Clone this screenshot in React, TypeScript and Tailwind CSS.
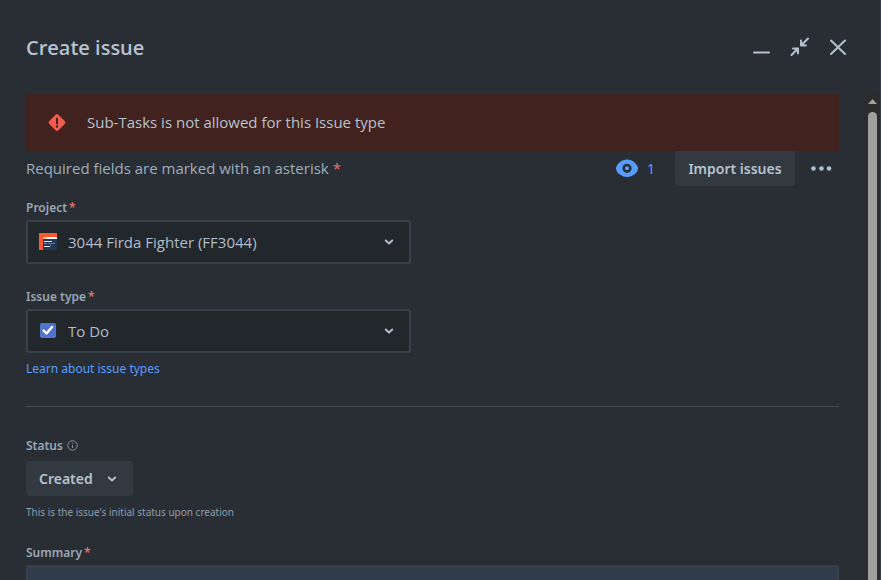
import { useState } from "react";
import type { ReactNode } from "react";

function Chevron() {
  return (
    <svg width="10" height="8" viewBox="0 0 10 8" fill="none" stroke="#b0bfd0" strokeWidth="2" strokeLinecap="round" strokeLinejoin="round" aria-hidden="true">
      <path d="M1.8 2.500 L5 5.500 L8.200 2.500" />
    </svg>
  );
}

function Asterisk() {
  return <span className="ml-0.5 text-[#e2746a]">*</span>;
}

function FieldLabel({ htmlFor, children }: { htmlFor: string; children: ReactNode }) {
  return (
    <label htmlFor={htmlFor} className="block text-[12px] leading-4 font-semibold text-[#98a6b6]">
      {children}
      <Asterisk />
    </label>
  );
}

function SelectField({ id, label, option, icon }: { id: string; label: string; option: string; icon: ReactNode }) {
  return (
    <div>
      <FieldLabel htmlFor={id}>{label}</FieldLabel>
      <div className="relative mt-1 w-full max-w-[385px]">
        <select
          id={id}
          className="block h-11 w-full appearance-none rounded-[3px] border-2 border-[#384148] bg-[#22272b] pr-10 pl-10 font-['Open_Sans','Noto_Sans',sans-serif] text-[15px] text-[#b0bcc9]"
        >
          <option>{option}</option>
        </select>
        <span className="pointer-events-none absolute inset-y-0 left-3 flex items-center">{icon}</span>
        <span className="pointer-events-none absolute inset-y-0 right-[17px] flex items-center">
          <Chevron />
        </span>
      </div>
    </div>
  );
}

function ProjectIcon() {
  return (
    <svg width="20" height="18" viewBox="0 0 20 18" aria-hidden="true">
      <rect x="1" width="18" height="17" fill="#ff5630" />
      <rect x="5" y="4" width="14" height="13" fill="#253858" />
      <rect x="5" y="4" width="14" height="2" fill="#f4f5f7" />
      <rect x="5" y="4" width="4" height="2" fill="#ffc5a0" />
      <path d="M6 8.500h8M6 13.500h6" stroke="#deebff" />
      <path d="M6 10.500h3M12 12.500h1" stroke="#ff5630" />
      <path d="M10 10.500h7" stroke="#00a3bf" />
    </svg>
  );
}

function TaskIcon() {
  return (
    <svg width="20" height="18" viewBox="0 0 20 18" fill="none" aria-hidden="true">
      <rect x="2" y="1" width="16" height="15" rx="2" fill="#4f74cf" />
      <path d="M5.500 8.500 L8.500 11.500 L14 5" stroke="#fff" strokeWidth="2.400" strokeLinecap="round" strokeLinejoin="round" />
    </svg>
  );
}

export default function App() {
  const [summary, setSummary] = useState("");
  return (
    <main className="flex h-screen flex-col overflow-hidden border-r border-[#34414c] bg-[#292e35] font-['Noto_Sans','Open_Sans',sans-serif] text-[14px] text-[#b6c2cf]">
      <header className="flex h-[94px] shrink-0 items-center justify-between pr-8 pl-[26px]">
        <h1 className="pt-0.5 font-['Open_Sans','Noto_Sans',sans-serif] text-[20px] leading-8 font-semibold">Create issue</h1>
        <div className="flex items-center gap-[18px] text-[#b3c1d1]">
          <button type="button" aria-label="Minimize" className="flex size-5 items-center justify-center">
            <svg width="20" height="20" viewBox="0 0 20 20" fill="none" stroke="currentColor" strokeWidth="2" strokeLinecap="round">
              <path d="M2 15.500h15" />
            </svg>
          </button>
          <button type="button" aria-label="Exit full screen" className="flex size-5 items-center justify-center">
            <svg width="20" height="20" viewBox="0 0 20 20" fill="none" stroke="currentColor" strokeWidth="2" strokeLinecap="round" strokeLinejoin="round">
              <path d="M18 1.500 L12 7.500 M11 3.500v5h5 M1.500 18 L7 12.500 M3 11.500h5v5" />
              <path d="M11 5v3.500h3.500zM4.500 11.500h3.500v3.500z" fill="currentColor" strokeWidth="1" />
            </svg>
          </button>
          <button type="button" aria-label="Close" className="flex size-5 items-center justify-center">
            <svg width="20" height="20" viewBox="0 0 20 20" fill="none" stroke="currentColor" strokeWidth="2" strokeLinecap="round">
              <path d="M3 3.500 L17 17 M17 3.500 L3 17" />
            </svg>
          </button>
        </div>
      </header>

      <div className="flex min-h-0 flex-1">
        <div className="min-w-0 flex-1 overflow-hidden px-[26px]">
          <div role="alert" className="flex h-[57px] items-center gap-5 rounded-[3px] bg-[#42221f] pl-[21px]">
            <svg width="20" height="20" viewBox="0 0 20 20" aria-hidden="true">
              <rect x="3.500" y="3" width="13" height="13" rx="2" transform="rotate(45 10 9.500)" fill="#f15b50" />
              <path d="M10 5.500v5" stroke="#42221f" strokeWidth="2" strokeLinecap="round" />
              <circle cx="10" cy="13.500" r="1.200" fill="#42221f" />
            </svg>
            <p className="font-['Open_Sans','Noto_Sans',sans-serif] text-[15px]">Sub-Tasks is not allowed for this Issue type</p>
          </div>

          <div className="flex h-[35px] items-center justify-between">
            <p className="font-['Open_Sans','Noto_Sans',sans-serif] text-[15px] text-[#9fadbc]">
              Required fields are marked with an asterisk <span className="text-[#e2746a]">*</span>
            </p>
            <div className="flex items-center">
              <button type="button" aria-label="Watch issue, 1 watcher" className="mr-5 flex items-center gap-2 text-[#579dff]">
                <svg width="24" height="20" viewBox="0 0 24 20" aria-hidden="true">
                  <path d="M12 0.500C6.500 0.500 1 5.500 1 9.500s5.500 8.500 11 8.500 11-4.500 11-8.500S17.500 0.500 12 0.500z" fill="currentColor" />
                  <circle cx="12" cy="9.300" r="3.300" fill="currentColor" stroke="#292e35" strokeWidth="2.600" />
                </svg>
                1
              </button>
              <button type="button" className="h-[35px] w-[120px] rounded-[3px] bg-[#323940] font-semibold">
                Import issues
              </button>
              <button type="button" aria-label="More actions" className="flex h-[35px] w-11 items-center pl-[15px]">
                <svg width="22" height="8" viewBox="0 0 22 8" fill="#b0bfd0">
                  <circle cx="3.500" cy="3.500" r="2.300" />
                  <circle cx="11.500" cy="3.500" r="2.300" />
                  <circle cx="19" cy="3.500" r="2.300" />
                </svg>
              </button>
            </div>
          </div>

          <div className="mt-3.5">
            <SelectField id="project" label="Project" option="3044 Firda Fighter (FF3044)" icon={<ProjectIcon />} />
          </div>
          <div className="mt-[25px]">
            <SelectField id="issue-type" label="Issue type" option="To Do" icon={<TaskIcon />} />
          </div>
          <a href="#issue-types" className="mt-2 inline-block align-top text-[12px] leading-4 text-[#579dff]">
            Learn about issue types
          </a>

          <hr className="mt-[29px] border-[#414a52]" />

          <div className="mt-[31px] flex items-center gap-1 text-[12px] leading-4 font-semibold text-[#98a6b6]">
            <span id="status-label">Status</span>
            <svg width="11" height="12" viewBox="0 0 11 12" fill="none" stroke="#8492a2" aria-hidden="true">
              <circle cx="5.500" cy="5.500" r="4.700" />
              <path d="M5.500 5v3M5.500 2.800v1" />
            </svg>
          </div>
          <button
            type="button"
            aria-describedby="status-label"
            className="mt-[7px] flex h-[35px] items-center gap-3.5 rounded-[3px] bg-[#323940] pr-4 pl-[13px] font-semibold"
          >
            Created
            <Chevron />
          </button>
          <p className="mt-2 text-[10px] leading-4 text-[#8f9dac]">This is the issue's initial status upon creation</p>

          <div className="mt-[25px]">
            <FieldLabel htmlFor="summary">Summary</FieldLabel>
            <input
              id="summary"
              type="text"
              value={summary}
              onChange={(event) => setSummary(event.target.value)}
              className="mt-1 block h-11 w-full rounded-[3px] border-2 border-[#384148] bg-[#303b4b] px-2 outline-none"
            />
          </div>
        </div>

        <div aria-hidden="true" className="flex w-[15px] shrink-0 flex-col items-center bg-[#2c2c2c] pt-[5px]">
          <svg width="9" height="5" viewBox="0 0 9 5" fill="#a0a0a0">
            <path d="M4.500 0 L9 5 H0z" />
          </svg>
          <div className="mt-2 w-[9px] flex-1 rounded-t-full bg-[#9f9f9f]" />
        </div>
      </div>
    </main>
  );
}
